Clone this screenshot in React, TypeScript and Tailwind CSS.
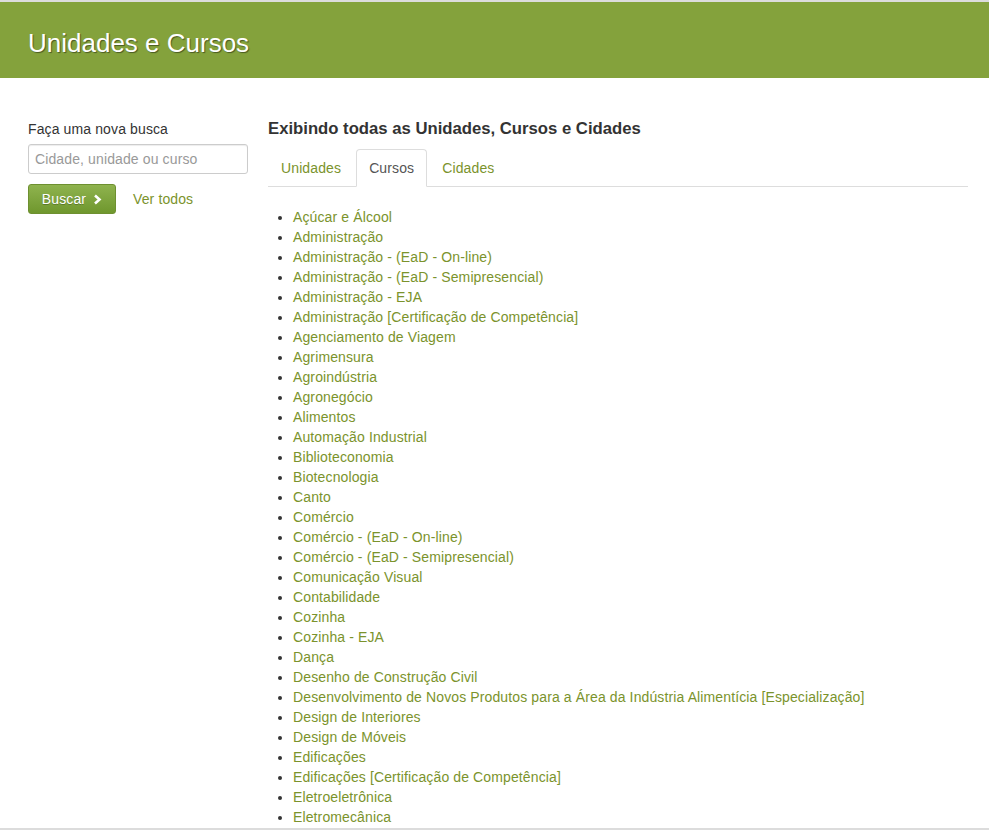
import React from 'react';

const cursos = [
  'Açúcar e Álcool',
  'Administração',
  'Administração - (EaD - On-line)',
  'Administração - (EaD - Semipresencial)',
  'Administração - EJA',
  'Administração [Certificação de Competência]',
  'Agenciamento de Viagem',
  'Agrimensura',
  'Agroindústria',
  'Agronegócio',
  'Alimentos',
  'Automação Industrial',
  'Biblioteconomia',
  'Biotecnologia',
  'Canto',
  'Comércio',
  'Comércio - (EaD - On-line)',
  'Comércio - (EaD - Semipresencial)',
  'Comunicação Visual',
  'Contabilidade',
  'Cozinha',
  'Cozinha - EJA',
  'Dança',
  'Desenho de Construção Civil',
  'Desenvolvimento de Novos Produtos para a Área da Indústria Alimentícia [Especialização]',
  'Design de Interiores',
  'Design de Móveis',
  'Edificações',
  'Edificações [Certificação de Competência]',
  'Eletroeletrônica',
  'Eletromecânica',
];

const tabs = ['Unidades', 'Cursos', 'Cidades'];

export default function App() {
  return (
    <div className="h-[830px] overflow-hidden bg-white border-t-2 border-[#dcdcdc] font-['Liberation_Sans',Arial,sans-serif] text-[14px] tracking-[0.12px] text-[#333] flex flex-col">
      <header className="h-[76px] shrink-0 bg-[#84a23c] flex items-center px-[28px]">
        <h1 className="text-[26px] leading-none tracking-normal text-white [text-shadow:1px_1px_1px_rgba(0,0,0,0.45)] pt-[6px]">
          Unidades e Cursos
        </h1>
      </header>

      <div className="flex-1 min-h-0 overflow-hidden flex gap-[20px] pl-[28px] pr-[21px] pt-[42px]">
        <aside className="w-[220px] shrink-0">
          <label className="block leading-[18px] mb-[6px]">Faça uma nova busca</label>
          <input
            type="text"
            placeholder="Cidade, unidade ou curso"
            className="w-full h-[30px] px-[6px] border border-[#ccc] rounded-[3px] text-[14px] placeholder:text-[#999] outline-none shadow-[inset_0_1px_1px_rgba(0,0,0,0.075)]"
          />
          <div className="flex items-center mt-[10px] gap-[17px]">
            <button className="w-[88px] h-[30px] rounded-[3px] border border-[#6e9030] bg-gradient-to-b from-[#8fb34e] to-[#6f972d] text-white text-[14px] flex items-center justify-center gap-[7px] [text-shadow:0_1px_0_rgba(0,0,0,0.25)]">
              Buscar
              <svg width="9" height="11" viewBox="0 0 9 11">
                <path d="M2 1.5 L6.5 5.5 L2 9.5" stroke="white" strokeWidth="2.6" fill="none" />
              </svg>
            </button>
            <a className="text-[#7b932c]">Ver todos</a>
          </div>
        </aside>

        <main className="flex-1 min-w-0">
          <h2 className="text-[16.7px] tracking-normal font-bold leading-[18px] text-[#333] mb-[11px]">
            Exibindo todas as Unidades, Cursos e Cidades
          </h2>
          <ul className="flex border-b border-[#ddd]">
            {tabs.map((t) => (
              <li key={t} className="mr-[2px] -mb-px">
                <a
                  className={
                    t === 'Cursos'
                      ? 'block px-[12px] py-[10px] leading-[16px] border border-[#ddd] border-b-white rounded-t-[4px] bg-white text-[#555]'
                      : 'block px-[12px] py-[10px] leading-[16px] border border-transparent text-[#7b932c]'
                  }
                >
                  {t}
                </a>
              </li>
            ))}
          </ul>
          <ul className="list-disc pl-[25px] pt-[20px] leading-[20px] marker:text-[#333]">
            {cursos.map((c) => (
              <li key={c}>
                <a className="text-[#7b932c]">{c}</a>
              </li>
            ))}
          </ul>
        </main>
      </div>
      <div className="h-[2px] shrink-0 bg-[#dcdcdc]" />
    </div>
  );
}
